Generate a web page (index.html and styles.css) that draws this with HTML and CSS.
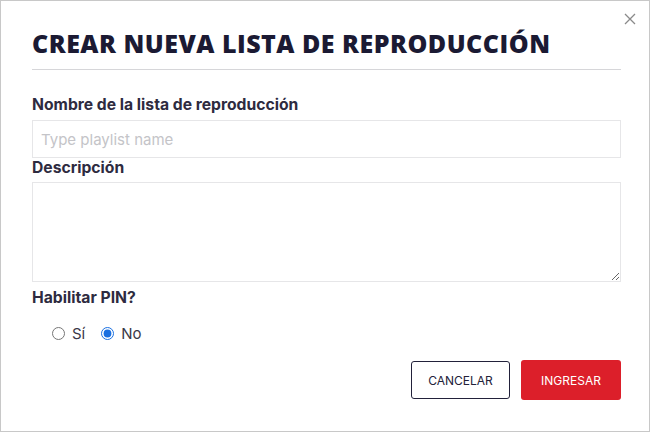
FILE: index.html
```html
<!DOCTYPE html>
<html lang="es">
<head>
<meta charset="utf-8">
<link rel="stylesheet" href="styles.css">
</head>
<body>
<div class="modal">
  <button class="close" aria-label="Cerrar">
    <svg width="12" height="12" viewBox="0 0 12 12"><path d="M1 1 L11 11 M11 1 L1 11" stroke="#8a8a8a" stroke-width="1.3" fill="none"/></svg>
  </button>
  <h1 class="title">CREAR NUEVA LISTA DE REPRODUCCIÓN</h1>
  <label class="label first">Nombre de la lista de reproducción</label>
  <input class="field" type="text" placeholder="Type playlist name">
  <label class="label">Descripción</label>
  <textarea class="area"></textarea>
  <div class="label pin">Habilitar PIN?</div>
  <div class="radios">
    <label class="radio"><input type="radio" name="pin"> <span>Sí</span></label>
    <label class="radio"><input type="radio" name="pin" checked> <span>No</span></label>
  </div>
  <div class="actions">
    <button class="btn cancel">CANCELAR</button>
    <button class="btn submit">INGRESAR</button>
  </div>
</div>
</body>
</html>
```
FILE: styles.css
```css
html, body { margin: 0; padding: 0; background: #fff; }
.modal {
  position: relative;
  width: 650px;
  height: 432px;
  box-sizing: border-box;
  border: 1px solid #c8c8c8;
  padding: 0 28px 0 31px;
  display: flex;
  flex-direction: column;
  font-family: Inter, "Noto Sans", sans-serif;
}
.close {
  position: absolute;
  top: 12px;
  right: 13px;
  width: 12px;
  height: 12px;
  padding: 0;
  border: 0;
  background: none;
  display: flex;
}
.title {
  margin: 27px 0 0;
  padding-bottom: 11px;
  border-bottom: 1px solid #d6d6d9;
  font-family: "Open Sans", sans-serif;
  font-weight: 800;
  font-size: 25px;
  line-height: 30px;
  color: #1b1a33;
  letter-spacing: 0.5px;
  white-space: nowrap;
}
.label {
  display: block;
  font-size: 15.7px;
  line-height: 20px;
  font-weight: 700;
  color: #2e2b3f;
  margin-bottom: 4px;
  white-space: nowrap;
}
.label.first { margin-top: 25px; margin-bottom: 5px; }
.field {
  height: 38px;
  box-sizing: border-box;
  border: 1px solid #e6e6e8;
  border-radius: 0;
  padding: 0 8px;
  font-family: Inter, sans-serif;
  font-size: 15px;
  color: #333;
  outline: none;
  margin: 0;
}
.field::placeholder { color: #c4c4c8; }
.area {
  height: 100px;
  box-sizing: border-box;
  border: 1px solid #e6e6e8;
  border-radius: 0;
  margin: 0;
  resize: both;
  outline: none;
}
.pin { margin-top: 6px; margin-bottom: 0; }
.radios {
  display: flex;
  gap: 16px;
  margin-top: 15px;
  padding-left: 20px;
  height: 20px;
  align-items: center;
}
.radio {
  display: flex;
  align-items: center;
  gap: 7px;
  font-size: 15px;
  color: #3a3848;
}
.radio input {
  margin: 0;
  width: 13px;
  height: 13px;
  accent-color: #1a6fe0;
}
.actions {
  display: flex;
  justify-content: flex-end;
  align-items: center;
  gap: 11px;
  margin-top: 17px;
}
.btn {
  font-family: Inter, sans-serif;
  font-size: 12px;
  padding: 0;
  cursor: pointer;
}
.cancel {
  width: 99px;
  height: 38px;
  background: #fff;
  border: 1px solid #22213a;
  border-radius: 3px;
  color: #22213a;
}
.submit {
  width: 100px;
  height: 40px;
  background: #dc1f2a;
  border: 0;
  border-radius: 3px;
  color: #fff;
}
```
